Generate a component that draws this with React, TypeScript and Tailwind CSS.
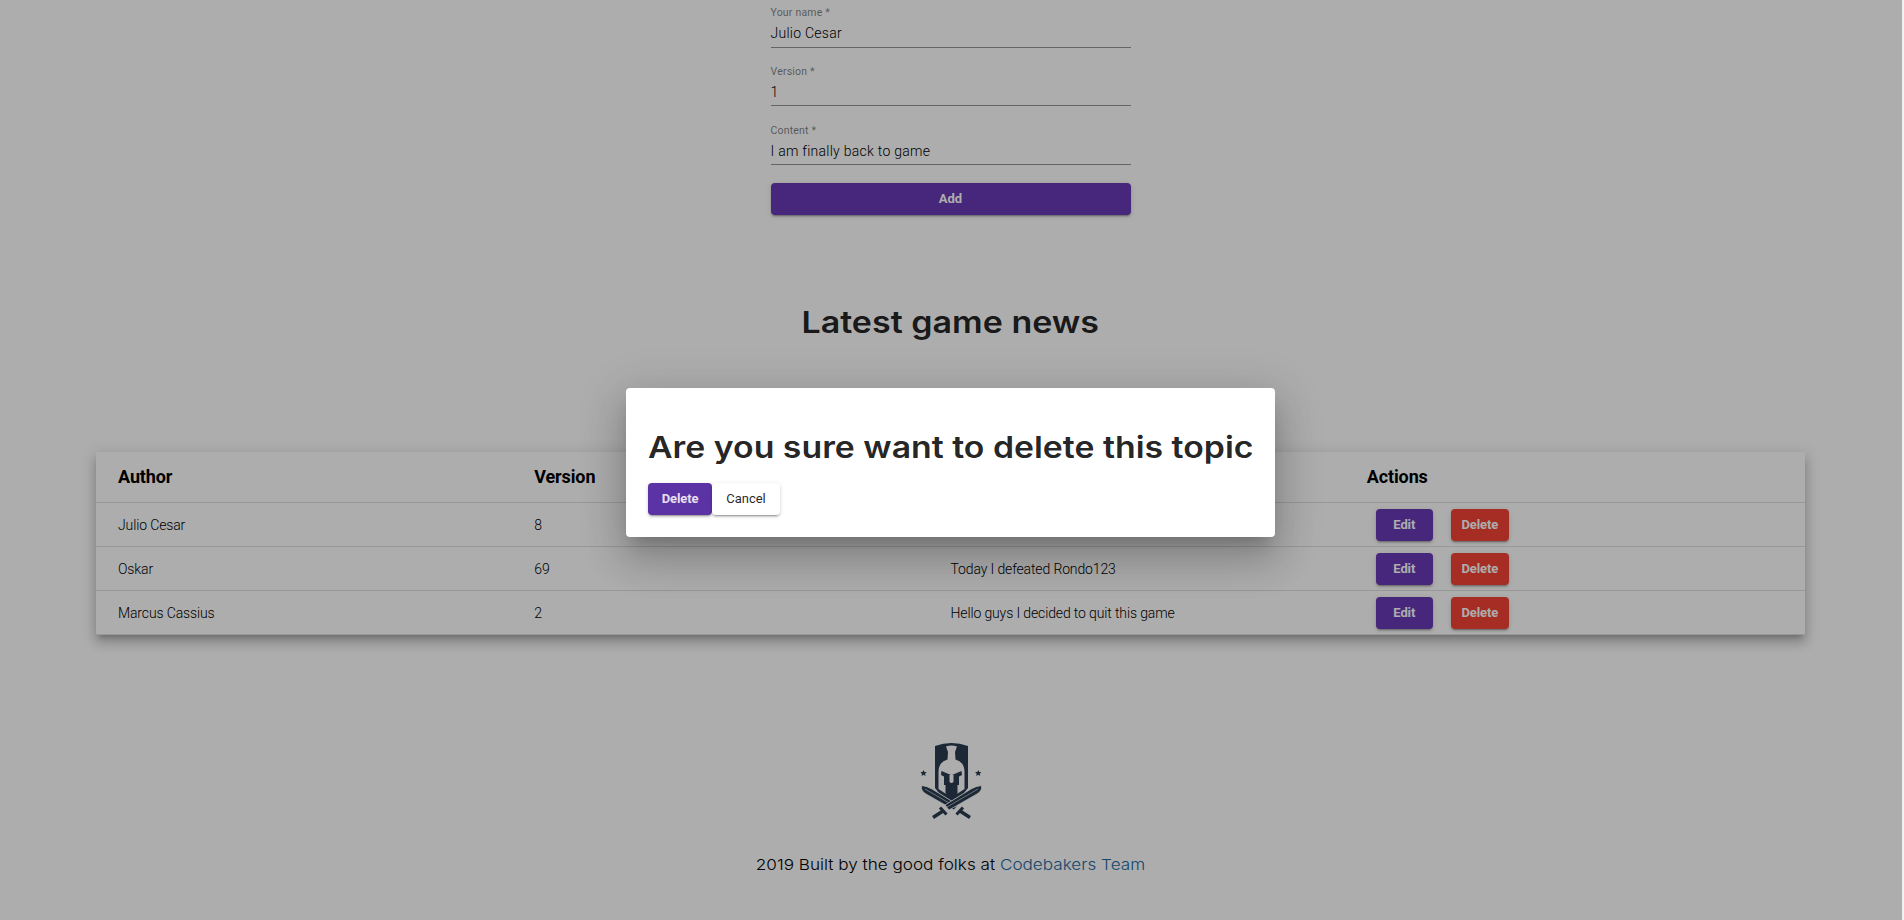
const rows = [
  { author: "Julio Cesar", version: "8", content: "" },
  { author: "Oskar", version: "69", content: "Today I defeated Rondo123" },
  { author: "Marcus Cassius", version: "2", content: "Hello guys I decided to quit this game" },
];

const raised = "shadow-[0_3px_1px_-2px_rgba(0,0,0,0.2),0_2px_2px_0_rgba(0,0,0,0.14),0_1px_5px_0_rgba(0,0,0,0.12)]";

function Field({ label, value }: { label: string; value: string }) {
  return (
    <div className="group flex h-[59px] flex-col">
      <span className="h-[15px] text-[10.5px] leading-[16px] tracking-[0.2px] text-black/50">{label}</span>
      <span className="mt-[5px] h-[20px] text-[14px] font-light leading-[16px] tracking-[0.26px] text-black">{value}</span>
      <span className="mt-[1px] h-px bg-black/42 group-first:mt-[2px]" />
    </div>
  );
}

function Sword() {
  return (
    <>
      <path d="M61.500 43.500Q62.500 49 57 52L29 68 25 63 51 47Q56 44 61.500 43.500Z" stroke="#fff" strokeWidth="0.8" />
      <path d="M58 47L27 65" stroke="#aab4be" strokeWidth="0.9" />
      <path d="M20 65.500L26.500 72.500" stroke="#2a3b4e" strokeWidth="3" />
      <path d="M23 69L13 75.500" stroke="#2a3b4e" strokeWidth="3.400" />
    </>
  );
}

function Logo() {
  return (
    <svg className="h-[78px] w-[64px]" viewBox="0 0 64 78" fill="#2a3b4e">
      <path d="M15 4Q31.500 -2 48 4V46L44 51 31.500 59 19 51 15 46Z" />
      <path d="M26 4.500Q31.500 2.500 37 4.500L35 10 35.500 17.500Q44.500 20 44.500 30V47L38.500 51 31.500 54 24.500 51 18.500 47V30Q18.500 20 27.500 17.500L28 10Z" fill="#fff" />
      <path d="M21.500 29L31 33V40H32V33L41.500 29 42 33 39 34.500V43H37.500V51L31.500 58 25.500 51V43H24V34.500L21 33Z" />
      <path d="M29.500 33H33.500V40Q31.500 42 29.500 40Z" fill="#fff" />
      <path d="M3.500 28l1 2.100 2.300.2-1.800 1.500.6 2.200-2.100-1.200-2 1.200.5-2.200L.3 30.300l2.300-.2zM58.200 28l1 2.100 2.300.2-1.800 1.500.6 2.200-2.100-1.200-2 1.200.5-2.200-1.700-1.500 2.300-.2z" />
      <g transform="matrix(-1 0 0 1 63 0)"><Sword /></g>
      <Sword />
    </svg>
  );
}

export default function App() {
  return (
    <div className="relative h-[920px] w-full overflow-hidden bg-[#f1f1f1] font-['Roboto',sans-serif]">
      <main className="flex h-full w-[1902px] flex-col items-center bg-white pr-px">
        <form className="mt-[5px] flex w-[360px] flex-col">
          <Field label="Your name *" value="Julio Cesar" />
          <Field label="Version *" value="1" />
          <Field label="Content *" value="I am finally back to game" />
          <button type="button" className={"mt-[1px] h-[32px] rounded-[4px] bg-[#673ab7] text-[13px] font-bold text-white " + raised}>Add</button>
        </form>
        <h1 className="mt-[87px] h-[40px] scale-x-[1.134] whitespace-nowrap font-['Inter',sans-serif] text-[30px] font-semibold leading-[40px] text-black/87">Latest game news</h1>
        <section className="mt-[110px] flex w-[1709px] flex-col bg-white shadow-[0_5px_5px_-3px_rgba(0,0,0,0.2),0_8px_10px_1px_rgba(0,0,0,0.14),0_3px_14px_2px_rgba(0,0,0,0.12)]">
          <div className="grid h-[51px] grid-cols-[416.250px_416.250px_416.250px_1fr] items-center border-b border-black/12 pb-[2px] pl-[22px] text-[18px] font-bold tracking-[-0.12px]">
            <span>Author</span><span>Version</span><span>Content</span><span>Actions</span>
          </div>
          {rows.map((r) => (
            <div key={r.author} className="grid h-[44px] grid-cols-[416.250px_416.250px_416.250px_1fr] items-center border-b border-black/12 pl-[22px] text-[14px] font-light tracking-[-0.13px] text-black">
              <span className="pt-[2px]">{r.author}</span><span className="pt-[2px]">{r.version}</span><span className="pt-[2px]">{r.content}</span>
              <span className="flex gap-[18px] pl-[9px]">
                <button className={"h-[32px] w-[57px] rounded-[4px] bg-[#673ab7] text-[13px] font-bold text-white " + raised}>Edit</button>
                <button className={"h-[32px] w-[58px] rounded-[4px] bg-[#f44336] text-[13px] font-bold tracking-[-0.1px] text-white " + raised}>Delete</button>
              </span>
            </div>
          ))}
        </section>
        <footer className="mt-[107px] flex flex-col items-center">
          <div className="pl-[3px]"><Logo /></div>
          <p className="mt-[33px] h-[24px] scale-x-[1.142] whitespace-nowrap font-['Inter',sans-serif] text-[15px] font-light leading-[24px]">
            2019 Built by the good folks at <a className="text-[#236a9f]">Codebakers Team</a>
          </p>
        </footer>
      </main>
      <div className="absolute inset-y-0 left-0 flex w-[1902px] items-start bg-black/32">
        <div role="dialog" className="ml-[626px] mt-[388px] flex h-[149px] w-[649px] flex-col rounded-[4px] bg-white px-[22px] shadow-[0_11px_15px_-7px_rgba(0,0,0,0.2),0_24px_38px_3px_rgba(0,0,0,0.14),0_9px_46px_8px_rgba(0,0,0,0.12)]">
          <h1 className="mt-[39px] h-[40px] origin-left scale-x-[1.127] whitespace-nowrap font-['Inter',sans-serif] text-[30px] font-semibold leading-[40px] text-black/87">Are you sure want to delete this topic</h1>
          <div className="mt-[16px] flex">
            <button className={"h-[32px] w-[64px] rounded-[4px] bg-[#5c33a4] text-[13px] font-bold tracking-[-0.1px] text-white/87 " + raised}>Delete</button>
            <button className={"h-[32px] w-[68px] rounded-[4px] bg-white text-[13px] text-black/87 " + raised}>Cancel</button>
          </div>
        </div>
      </div>
    </div>
  );
}
